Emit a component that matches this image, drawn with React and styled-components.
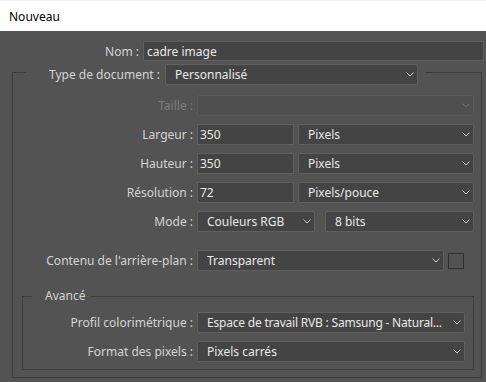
import React from "react";
import styled, { createGlobalStyle } from "styled-components";

const GlobalStyle = createGlobalStyle`
  * {
    box-sizing: border-box;
  }
  body {
    margin: 0;
    font-family: "Noto Sans", "Liberation Sans", sans-serif;
    font-size: 12px;
  }
`;

const Window = styled.div`
  width: 486px;
  height: 382px;
  display: flex;
  flex-direction: column;
  overflow: hidden;
`;

const TitleBar = styled.div`
  height: 31px;
  flex-shrink: 0;
  background: #ffffff;
  border-top: 1px solid #f0f0f0;
  display: flex;
  align-items: center;
  padding-left: 9px;
  color: #000000;
  font-size: 12px;
`;

const Panel = styled.div`
  flex: 1;
  background: #535353;
  padding: 10px 0 4px 0;
  display: flex;
  flex-direction: column;
`;

const FieldRow = styled.div`
  display: grid;
  grid-template-columns: ${(p) => p.$labelWidth}px 1fr;
  column-gap: 4px;
  align-items: center;
  height: ${(p) => p.$height || 21}px;
  padding-right: ${(p) => p.$padRight || 0}px;
  margin-top: ${(p) => p.$top || 0}px;
`;

const Label = styled.span`
  text-align: right;
  white-space: nowrap;
  color: ${(p) => (p.$disabled ? "#7c7c7c" : "#d4d4d4")};
`;

const TextInput = styled.div`
  height: ${(p) => p.$height || 21}px;
  width: ${(p) => (p.$width ? `${p.$width}px` : "auto")};
  flex: ${(p) => (p.$width ? "none" : "1")};
  background: #444444;
  border: 1px solid #5f5f5f;
  color: #e8e8e8;
  padding-left: ${(p) => p.$pad || 2}px;
  display: flex;
  align-items: center;
  white-space: nowrap;
`;

const SelectBox = styled.div`
  height: 21px;
  width: ${(p) => (p.$width ? `${p.$width}px` : "auto")};
  flex: ${(p) => (p.$width ? "none" : "1")};
  min-width: 0;
  background: ${(p) => (p.$disabled ? "#4f4f4f" : "#444444")};
  border: 1px solid ${(p) => (p.$disabled ? "#5a5a5a" : "#5f5f5f")};
  border-radius: 2px;
  color: #e8e8e8;
  display: flex;
  align-items: center;
  padding: 0 3px 0 9px;
  gap: 3px;
`;

const SelectValue = styled.span`
  flex: 1;
  min-width: 0;
  overflow: hidden;
  white-space: nowrap;
  text-overflow: clip;
  letter-spacing: ${(p) => p.$tight ? "-0.2px" : "normal"};
`;

const Chevron = styled.svg`
  flex-shrink: 0;
  width: 8px;
  height: 5px;
`;

const FieldGroup = styled.div`
  display: flex;
  align-items: center;
  gap: ${(p) => p.$gap || 4}px;
  min-width: 0;
`;

const Swatch = styled.div`
  width: 16px;
  height: 16px;
  flex-shrink: 0;
  border: 1px solid #2f2f2f;
  margin-right: 10px;
`;

const Group = styled.fieldset`
  margin: ${(p) => p.$margin};
  padding: ${(p) => p.$padding};
  border: 1px solid #3c3c3c;
  min-width: 0;
`;

const DocLegend = styled.legend`
  margin-left: 13px;
  padding: 5px 7px 0 0;
  display: flex;
  align-items: center;
  gap: 5px;
`;

const LegendLabel = styled.span`
  width: 134px;
  text-align: right;
  color: #d4d4d4;
  white-space: nowrap;
`;

const TextLegend = styled.legend`
  margin-left: 9px;
  padding: 0 6px 0 13px;
  height: 16px;
  line-height: 16px;
  color: #d4d4d4;
`;

const Rows = styled.div`
  display: flex;
  flex-direction: column;
  gap: 8px;
`;

const Select = ({ value, width, disabled, tight }) => (
  <SelectBox $width={width} $disabled={disabled}>
    <SelectValue $tight={tight}>{value}</SelectValue>
    <Chevron viewBox="0 0 8 5">
      <path
        d="M0.5 0.5 L4 4 L7.5 0.5"
        fill="none"
        stroke={disabled ? "#6c6c6c" : "#c8c8c8"}
        strokeWidth="1"
      />
    </Chevron>
  </SelectBox>
);

export default function App() {
  return (
    <>
      <GlobalStyle />
      <Window>
        <TitleBar>Nouveau</TitleBar>
        <Panel>
          <FieldRow $labelWidth={139} $height={20} $padRight={2}>
            <Label>Nom :</Label>
            <TextInput $height={20} $pad={3}>cadre image</TextInput>
          </FieldRow>

          <Group $margin="-2px 4px 0 12px" $padding="10px 7px 7px 0">
            <DocLegend>
              <LegendLabel>Type de document :</LegendLabel>
              <Select value="Personnalisé" width={253} />
            </DocLegend>

            <Rows>
              <FieldRow $labelWidth={180}>
                <Label $disabled>Taille :</Label>
                <Select value="" disabled />
              </FieldRow>
              <FieldRow $labelWidth={180}>
                <Label>Largeur :</Label>
                <FieldGroup>
                  <TextInput $width={97}>350</TextInput>
                  <Select value="Pixels" />
                </FieldGroup>
              </FieldRow>
              <FieldRow $labelWidth={180}>
                <Label>Hauteur :</Label>
                <FieldGroup>
                  <TextInput $width={97}>350</TextInput>
                  <Select value="Pixels" />
                </FieldGroup>
              </FieldRow>
              <FieldRow $labelWidth={180}>
                <Label>Résolution :</Label>
                <FieldGroup>
                  <TextInput $width={97}>72</TextInput>
                  <Select value="Pixels/pouce" />
                </FieldGroup>
              </FieldRow>
              <FieldRow $labelWidth={180}>
                <Label>Mode :</Label>
                <FieldGroup $gap={10}>
                  <Select value="Couleurs RGB" width={118} />
                  <Select value="8 bits" />
                </FieldGroup>
              </FieldRow>
            </Rows>

            <FieldRow $labelWidth={180} $top={18}>
              <Label>Contenu de l'arrière-plan :</Label>
              <FieldGroup>
                <Select value="Transparent" />
                <Swatch />
              </FieldGroup>
            </FieldRow>

            <Group $margin="17px 0 0 9px" $padding="8px 8px 7px 0">
              <TextLegend>Avancé</TextLegend>
              <Rows>
                <FieldRow $labelWidth={170}>
                  <Label>Profil colorimétrique :</Label>
                  <Select
                    value="Espace de travail RVB : Samsung - Natural..."
                    tight
                  />
                </FieldRow>
                <FieldRow $labelWidth={170}>
                  <Label>Format des pixels :</Label>
                  <Select value="Pixels carrés" />
                </FieldRow>
              </Rows>
            </Group>
          </Group>
        </Panel>
      </Window>
    </>
  );
}
